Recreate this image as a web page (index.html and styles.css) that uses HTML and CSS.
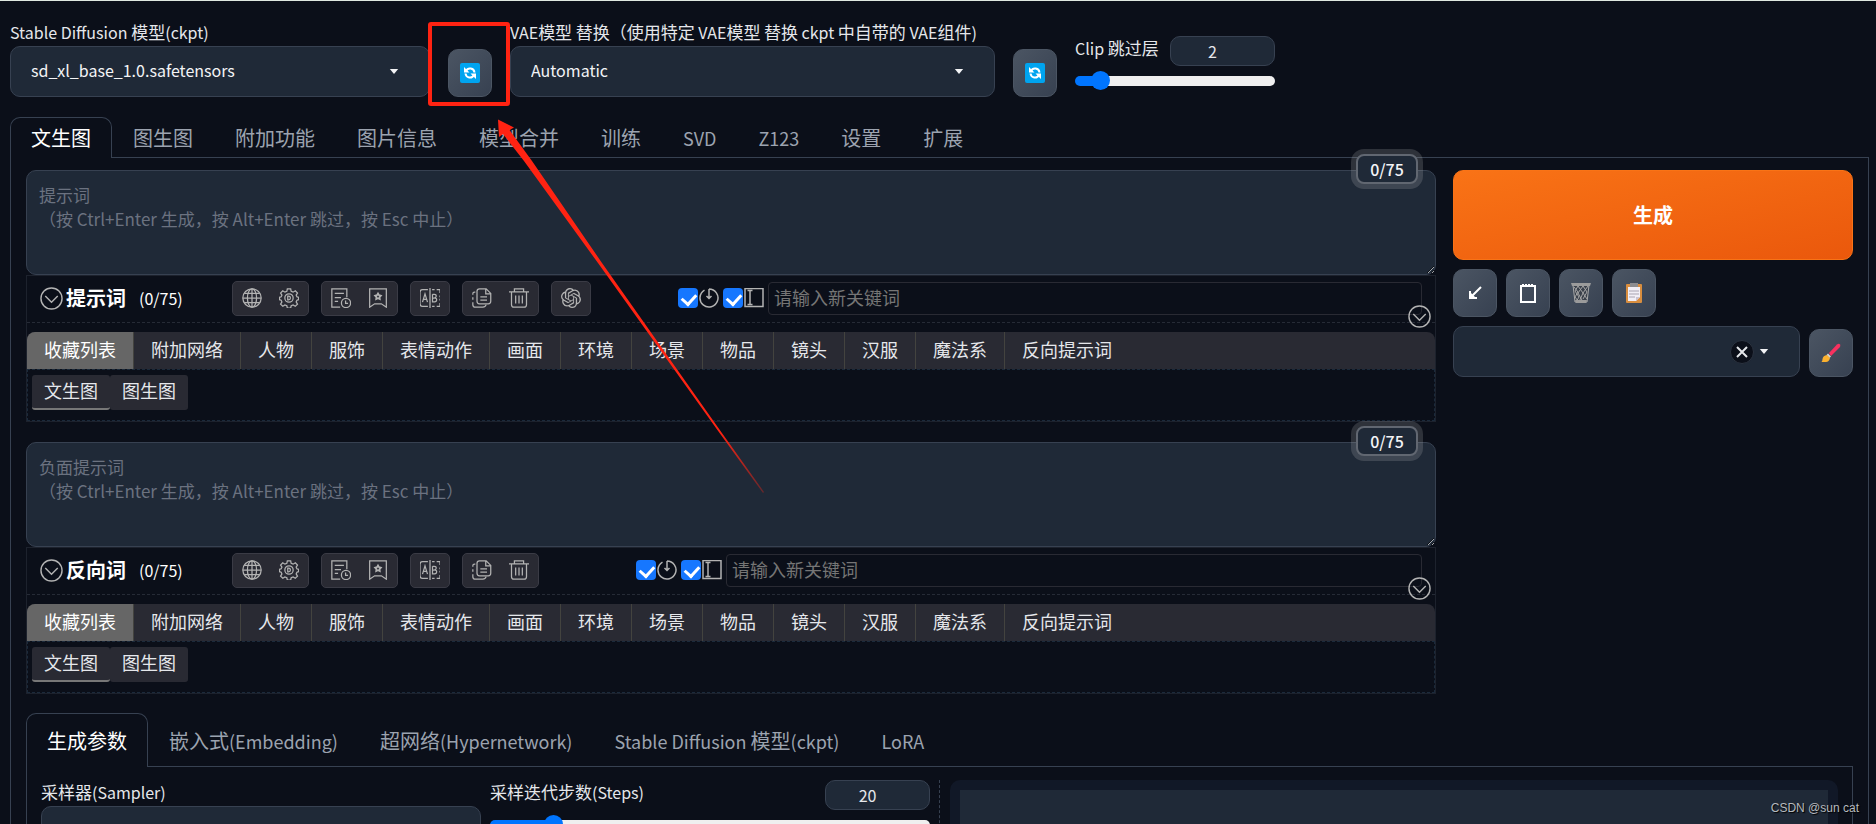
FILE: index.html
```html
<!DOCTYPE html>
<html lang="zh-CN">
<head>
<meta charset="utf-8">
<title>Stable Diffusion</title>
<link rel="stylesheet" href="styles.css">
</head>
<body>
<svg class="sprite" aria-hidden="true">
  <symbol id="i-refresh" viewBox="0 0 20 20"><rect width="20" height="20" rx="2" fill="#00a4ef"/><path d="M6 8A4.500 4.500 0 0 1 14.500 9.500M14 12A4.500 4.500 0 0 1 5.500 10.500" fill="none" stroke="#fff" stroke-width="2"/><path d="M4 4v5.500h5.500zM16 16v-5.500h-5.500z" fill="#fff"/></symbol>
  <symbol id="i-caret" viewBox="0 0 12 6"><path d="M1 0h10L6 6z" fill="currentColor"/></symbol>
  <symbol id="i-down" viewBox="0 0 24 24"><circle cx="12" cy="12" r="11"/><path d="M5.500 9.500l6.500 6.500 6.500-6.500"/></symbol>
  <symbol id="i-globe" viewBox="0 0 24 24"><circle cx="12" cy="12" r="11"/><ellipse cx="12" cy="12" rx="5.500" ry="11"/><path d="M12 1v22M1 12h22M3 6.500h18M3 17.500h18"/></symbol>
  <symbol id="i-gear" viewBox="0 0 24 24"><path d="M10 1h4l.6 3 2.300 1 2.700-1.700 2.600 2.700-1.600 2.500.9 2 2 .7v2.800l-2 .7-.9 2 1.600 2.600-2.700 2.600-2.600-1.600-2.300 1-.6 2.700h-4l-.6-2.700-2.300-1-2.500 1.600-2.700-2.600 1.600-2.600-.9-2-2-.7v-2.800l2-.7.9-2-1.600-2.500L4.500 3.300 7.100 5l2.300-1z"/><circle cx="12" cy="12" r="5"/><path d="M10.500 9.800v4.400h1q2.200 0 2.200-2.200t-2.200-2.200z"/></symbol>
  <symbol id="i-history" viewBox="0 0 24 24"><path d="M11 23H1V1h18v10M4.500 6.500h11M4.500 11.500h7.500M4.500 16h4"/><circle cx="18" cy="18" r="5.500"/><path d="M17.500 15v3.500h3"/></symbol>
  <symbol id="i-mark" viewBox="0 0 24 24"><path d="M2 1h20v22l-6-4H8l-6 4z"/><path d="M12 6.500l1.200 2.100 2.300.6-1.600 1.700.3 2.400-2.200-1-2.200 1 .3-2.400-1.600-1.700 2.300-.6z" stroke-width="2"/></symbol>
  <symbol id="i-ab" viewBox="0 0 24 24"><path d="M12 0v24M9.500 2H3Q0 2 0 5v14q0 3 3 3h6.500M14.500 2h3M20 2h4v4M24 9v2M24 13v2M24 18v4h-4M17.500 22h-3"/><path d="M3 17l3-10 3 10M4 13.500h4M15 7.500v9h2.500q2.500 0 2.500-2.300t-2.500-2.200H15M15 7.500h2.200q2.300 0 2.300 2.200T17.200 12"/></symbol>
  <symbol id="i-copy" viewBox="0 0 24 24"><path d="M9 1h8l5.500 5.500V16q0 3-3 3H9q-3 0-3-3V4q0-3 3-3zM16.500 1v6h6M10 10.500h8M10 14.500h8"/><path d="M4 5H3Q1 5 1 7v1M1 11v3M1 17v3q0 3 3 3h9q3 0 4-3"/></symbol>
  <symbol id="i-trash" viewBox="0 0 24 24"><path d="M0 4.500h24M6.500 4.500V1h11v3.500M3 5v15q0 3 3 3h12q3 0 3-3V5M8 9v9.500M12 9v9.500M16 9v9.500"/></symbol>
  <symbol id="i-knot" viewBox="0 0 24 24"><path fill="#b3b3b3" stroke="none" d="M22.2819 9.8211a5.9847 5.9847 0 0 0-.5157-4.9108 6.0462 6.0462 0 0 0-6.5098-2.9A6.0651 6.0651 0 0 0 4.9807 4.1818a5.9847 5.9847 0 0 0-3.9977 2.9 6.0462 6.0462 0 0 0 .7427 7.0966 5.98 5.98 0 0 0 .511 4.9107 6.051 6.051 0 0 0 6.5146 2.9001A5.9847 5.9847 0 0 0 13.2599 24a6.0557 6.0557 0 0 0 5.7718-4.2058 5.9894 5.9894 0 0 0 3.9977-2.9001 6.0557 6.0557 0 0 0-.7475-7.0729zm-9.022 12.6081a4.4755 4.4755 0 0 1-2.8764-1.0408l.1419-.0804 4.7783-2.7582a.7948.7948 0 0 0 .3927-.6813v-6.7369l2.02 1.1686a.071.071 0 0 1 .038.052v5.5826a4.504 4.504 0 0 1-4.4945 4.4944zm-9.6607-4.1254a4.4708 4.4708 0 0 1-.5346-3.0137l.142.0852 4.783 2.7582a.7712.7712 0 0 0 .7806 0l5.8428-3.3685v2.3324a.0804.0804 0 0 1-.0332.0615L9.74 19.9502a4.4992 4.4992 0 0 1-6.1408-1.6464zM2.3408 7.8956a4.485 4.485 0 0 1 2.3655-1.9728V11.6a.7664.7664 0 0 0 .3879.6765l5.8144 3.3543-2.0201 1.1685a.0757.0757 0 0 1-.071 0l-4.8303-2.7865A4.504 4.504 0 0 1 2.3408 7.872zm16.5963 3.8558L13.1038 8.364 15.1192 7.2a.0757.0757 0 0 1 .071 0l4.8303 2.7913a4.4944 4.4944 0 0 1-.6765 8.1042v-5.6772a.79.79 0 0 0-.407-.667zm2.0107-3.0231l-.142-.0852-4.7735-2.7818a.7759.7759 0 0 0-.7854 0L9.409 9.2297V6.8974a.0662.0662 0 0 1 .0284-.0615l4.8303-2.7866a4.4992 4.4992 0 0 1 6.6802 4.66zM8.3065 12.863l-2.02-1.1638a.0804.0804 0 0 1-.038-.0567V6.0742a4.4992 4.4992 0 0 1 7.3757-3.4537l-.142.0805L8.704 5.459a.7948.7948 0 0 0-.3927.6813zm1.0976-2.3654l2.602-1.4998 2.6069 1.4998v2.9994l-2.5974 1.4997-2.6067-1.4997Z"/></symbol>
  <symbol id="i-timer" viewBox="0 0 20 20"><path d="M10 1v9M7.500 8l2.500 2.500L12.500 8M10 1a9 9 0 1 1-4.500 1.200"/></symbol>
  <symbol id="i-cursor" viewBox="0 0 20 20"><path d="M1 .5h18v18H1zM3.500 2.500h5M6 2.500v14M3.500 16.500h5"/></symbol>
</svg>

<header class="quick">
  <div class="field field--ckpt">
    <label for="ckpt"><span class="en">Stable Diffusion</span> 模型<span class="en">(ckpt)</span></label>
    <div class="pick"><select id="ckpt"><option>sd_xl_base_1.0.safetensors</option></select><svg class="pick__caret"><use href="#i-caret"/></svg></div>
  </div>
  <button class="tool" aria-label="刷新模型"><svg class="emoji"><use href="#i-refresh"/></svg></button>
  <div class="field field--vae">
    <label for="vae"><span class="en">VAE</span>模型<span class="en"> </span>替换（使用特定<span class="en"> VAE</span>模型<span class="en"> </span>替换<span class="en"> ckpt </span>中自带的<span class="en"> VAE</span>组件<span class="en">)</span></label>
    <div class="pick"><select id="vae"><option>Automatic</option></select><svg class="pick__caret"><use href="#i-caret"/></svg></div>
  </div>
  <button class="tool" aria-label="刷新 VAE"><svg class="emoji"><use href="#i-refresh"/></svg></button>
  <div class="slider slider--clip">
    <div class="slider__head"><label for="clip"><span class="en">Clip </span>跳过层</label><input class="number" type="text" inputmode="numeric" value="2" aria-label="Clip 数值"></div>
    <input class="range" id="clip" type="range" min="1" max="12" value="2" style="--fill:13%">
  </div>
</header>

<main>
  <nav class="tabs">
    <button class="tab tab--on">文生图</button><button class="tab">图生图</button><button class="tab">附加功能</button><button class="tab">图片信息</button><button class="tab">模型合并</button><button class="tab">训练</button><button class="tab"><span class="en">SVD</span></button><button class="tab"><span class="en">Z123</span></button><button class="tab">设置</button><button class="tab">扩展</button>
  </nav>
  <section class="panel">
    <div class="top">
      <div class="prompts">
        <div class="prompt">
          <textarea aria-label="提示词" placeholder="提示词&#10;（按 Ctrl+Enter 生成，按 Alt+Enter 跳过，按 Esc 中止）"></textarea>
          <span class="counter">0/75</span>
          <div class="kit">
            <div class="kit__head">
              <button class="fold" aria-label="折叠"><svg><use href="#i-down"/></svg></button>
              <strong class="kit__name">提示词</strong><span class="kit__count">(0/75)</span>
              <div class="kit__tools">
                <div class="group"><button aria-label="语言"><svg><use href="#i-globe"/></svg></button><button aria-label="设置"><svg><use href="#i-gear"/></svg></button></div>
                <div class="group"><button aria-label="历史"><svg><use href="#i-history"/></svg></button><button aria-label="收藏"><svg><use href="#i-mark"/></svg></button></div>
                <div class="group"><button aria-label="翻译"><svg><use href="#i-ab"/></svg></button></div>
                <div class="group"><button aria-label="复制"><svg><use href="#i-copy"/></svg></button><button aria-label="删除"><svg><use href="#i-trash"/></svg></button></div>
                <div class="group"><button aria-label="ChatGPT"><svg><use href="#i-knot"/></svg></button></div>
              </div>
              <div class="adder">
                <label class="opt"><input type="checkbox" checked aria-label="自动载入"><svg><use href="#i-timer"/></svg></label>
                <label class="opt"><input type="checkbox" checked aria-label="自动输入"><svg><use href="#i-cursor"/></svg></label>
                <input class="adder__text" type="text" placeholder="请输入新关键词" aria-label="新关键词">
              </div>
              <button class="fold fold--end" aria-label="展开"><svg><use href="#i-down"/></svg></button>
            </div>
            <div class="cats"><button class="cat cat--on">收藏列表</button><button class="cat">附加网络</button><button class="cat">人物</button><button class="cat">服饰</button><button class="cat">表情动作</button><button class="cat">画面</button><button class="cat">环境</button><button class="cat">场景</button><button class="cat">物品</button><button class="cat">镜头</button><button class="cat">汉服</button><button class="cat">魔法系</button><button class="cat">反向提示词</button></div>
            <div class="subs"><button class="sub sub--on">文生图</button><button class="sub">图生图</button></div>
          </div>
        </div>

        <div class="prompt">
          <textarea aria-label="负面提示词" placeholder="负面提示词&#10;（按 Ctrl+Enter 生成，按 Alt+Enter 跳过，按 Esc 中止）"></textarea>
          <span class="counter">0/75</span>
          <div class="kit">
            <div class="kit__head">
              <button class="fold" aria-label="折叠"><svg><use href="#i-down"/></svg></button>
              <strong class="kit__name">反向词</strong><span class="kit__count">(0/75)</span>
              <div class="kit__tools">
                <div class="group"><button aria-label="语言"><svg><use href="#i-globe"/></svg></button><button aria-label="设置"><svg><use href="#i-gear"/></svg></button></div>
                <div class="group"><button aria-label="历史"><svg><use href="#i-history"/></svg></button><button aria-label="收藏"><svg><use href="#i-mark"/></svg></button></div>
                <div class="group"><button aria-label="翻译"><svg><use href="#i-ab"/></svg></button></div>
                <div class="group"><button aria-label="复制"><svg><use href="#i-copy"/></svg></button><button aria-label="删除"><svg><use href="#i-trash"/></svg></button></div>
              </div>
              <div class="adder adder--far">
                <label class="opt"><input type="checkbox" checked aria-label="自动载入"><svg><use href="#i-timer"/></svg></label>
                <label class="opt"><input type="checkbox" checked aria-label="自动输入"><svg><use href="#i-cursor"/></svg></label>
                <input class="adder__text" type="text" placeholder="请输入新关键词" aria-label="新关键词">
              </div>
              <button class="fold fold--end" aria-label="展开"><svg><use href="#i-down"/></svg></button>
            </div>
            <div class="cats"><button class="cat cat--on">收藏列表</button><button class="cat">附加网络</button><button class="cat">人物</button><button class="cat">服饰</button><button class="cat">表情动作</button><button class="cat">画面</button><button class="cat">环境</button><button class="cat">场景</button><button class="cat">物品</button><button class="cat">镜头</button><button class="cat">汉服</button><button class="cat">魔法系</button><button class="cat">反向提示词</button></div>
            <div class="subs"><button class="sub sub--on">文生图</button><button class="sub">图生图</button></div>
          </div>
        </div>
      </div>

      <aside class="actions">
        <button class="generate">生成</button>
        <div class="actions__row">
          <button class="tool" aria-label="读取参数"><svg class="emoji" viewBox="0 0 20 20"><path d="M16 4L6 14M5 8v7h7" fill="none" stroke="#fff" stroke-width="2"/><path d="M4 8l8 8H4z" fill="#fff"/></svg></button>
          <button class="tool" aria-label="粘贴"><svg class="emoji" viewBox="0 0 20 20"><path d="M3 3h14v16H3z" fill="none" stroke="#fff" stroke-width="2"/><path d="M5 1v3M8 1v3M11 1v3M14 1v3" stroke="#fff" stroke-width="2"/></svg></button>
          <button class="tool" aria-label="清空"><svg class="emoji" viewBox="0 0 20 20"><path d="M2 2h16l-2 17H4z" fill="#3b414b" stroke="#aaa" stroke-width="1"/><path d="M3 4l4 5-3 5 3 4M7 3l-3 5 4 6-3 5M7 3l5 7-4 9M12 3L7 10l5 9M12 3l4 6-4 7M17 3l-5 7 4 6" fill="none" stroke="#a5a5a5" stroke-width="1"/><path d="M0 0h20l-1 3H1zM4 17h12l-1 3H5z" fill="#9b9b9b"/></svg></button>
          <button class="tool" aria-label="应用样式"><svg class="emoji" viewBox="0 0 20 20"><rect x="2" y="1" width="16" height="19" rx="1" fill="#d98e3f"/><path d="M4 4h12v10l-4 4H4z" fill="#f1eef6"/><path d="M12 18v-4h4z" fill="#c9c2d3"/><path d="M6 0h8v4H6z" fill="#8c8c90"/><path d="M5 8h10M5 11h10M5 14h6" stroke="#a9a4b2"/></svg></button>
        </div>
        <div class="actions__row">
          <div class="pick pick--style"><select aria-label="样式"><option></option></select><button class="clear" aria-label="清除"><svg viewBox="0 0 12 12"><path d="M1 1l10 10M11 1L1 11"/></svg></button><svg class="pick__caret"><use href="#i-caret"/></svg></div>
          <button class="tool" aria-label="编辑样式"><svg class="emoji" viewBox="0 0 20 20"><path d="M8 10L16 1.500q2-1.500 3 0t-.5 3L10 13z" fill="#f8315f"/><path d="M7 10.500l3 3-1.500 1.500-3-3z" fill="#d3d3d3"/><path d="M6 12l3 3q-1 4-4 4H.5q1-1 1-3 .5-3.500 4.500-4z" fill="#fbb12f"/></svg></button>
        </div>
      </aside>
    </div>

    <nav class="tabs tabs--tall">
      <button class="tab tab--on">生成参数</button><button class="tab">嵌入式<span class="en">(Embedding)</span></button><button class="tab">超网络<span class="en">(Hypernetwork)</span></button><button class="tab"><span class="en">Stable Diffusion </span>模型<span class="en">(ckpt)</span></button><button class="tab"><span class="en">LoRA</span></button>
    </nav>
    <section class="params">
      <div class="params__form">
        <div class="field">
          <label for="sampler">采样器<span class="en">(Sampler)</span></label>
          <div class="pick"><select id="sampler"><option></option></select></div>
        </div>
        <div class="slider">
          <div class="slider__head"><label for="steps">采样迭代步数<span class="en">(Steps)</span></label><input class="number" type="text" inputmode="numeric" value="20" aria-label="步数数值"></div>
          <input class="range" id="steps" type="range" min="1" max="150" value="20" style="--fill:14%">
        </div>
      </div>
      <div class="gallery"><div class="gallery__view"></div></div>
    </section>
  </section>
</main>

<svg class="marks" width="800" height="520" viewBox="0 0 800 520" aria-hidden="true">
  <defs><linearGradient id="fade" gradientUnits="userSpaceOnUse" x1="720" y1="431" x2="764" y2="493"><stop offset="0" stop-color="#ff2312"/><stop offset="1" stop-color="#ff2312" stop-opacity="0.300"/></linearGradient></defs>
  <rect x="430" y="24" width="78" height="80" rx="1" fill="none" stroke="#ff2312" stroke-width="4"/>
  <path d="M498 119.500L514 127.500 509.500 130 532 161 602 263 720.500 431 764 492 763 493 718.500 431.500 598 263 524 161 503 134 499 137z" fill="url(#fade)"/>
</svg>
<div class="credit">CSDN @sun cat</div>
</body>
</html>
```
FILE: styles.css
```css
* { box-sizing: border-box; }

body {
  position: relative;
  margin: 0;
  height: 100vh;
  overflow: hidden;
  padding: 19px 7px 0 10px;
  border-top: 1px solid #dfe8e0;
  background: #0b0f19;
  color: #e5e7eb;
  font: 18px/24px "Noto Sans CJK SC", sans-serif;
}

button, input, select, textarea { font: inherit; color: inherit; margin: 0; }
button { padding: 0; border: 0; background: none; }
.sprite { display: none; }

/* Latin runs are set a step smaller than the Chinese around them */
.en { font-size: 16px; line-height: 1; white-space: pre; }
.tab .en { font-size: 18px; }

/* quick settings */
.quick { display: flex; align-items: flex-end; gap: 18px; }
.field { display: flex; flex-direction: column; gap: 2px; min-width: 0; }
.field--ckpt { width: 420px; }
.field--vae { width: 485px; }
label { height: 24px; white-space: nowrap; font-size: 17px; }

.pick { position: relative; display: flex; align-items: center; }
.pick select {
  appearance: none;
  width: 100%;
  height: 51px;
  padding: 0 20px 3px;
  border: 1px solid #374151;
  border-radius: 10px;
  background: #1f2937;
  color: #f3f4f6;
  font-size: 16px;
}
.pick__caret { position: absolute; right: 31px; width: 10px; height: 5px; color: #f3f4f6; }
.pick--style { flex: 1; }
.clear {
  position: absolute;
  right: 46px;
  display: grid;
  place-items: center;
  width: 24px;
  height: 24px;
  border: 1px solid #2b3340;
  border-radius: 50%;
  background: #0b0f19;
}
.clear svg { width: 12px; height: 12px; stroke: #e5e7eb; stroke-width: 2; }

.tool {
  display: grid;
  place-items: center;
  flex: none;
  width: 44px;
  height: 48px;
  border: 1px solid #4b5563;
  border-radius: 10px;
  background: linear-gradient(to bottom right, #4b5563, #374151);
}
.emoji { width: 20px; height: 20px; }

.slider { display: flex; flex-direction: column; gap: 5px; min-width: 0; }
.slider--clip { width: 200px; margin-bottom: 6px; }
.slider__head { display: flex; justify-content: space-between; align-items: flex-start; }
.number {
  width: 105px;
  height: 30px;
  padding: 0 20px 0 0;
  border: 1px solid #374151;
  border-radius: 10px;
  background: #1f2937;
  text-align: center;
  font-size: 16px;
}
.range { appearance: none; width: 100%; height: 20px; background: none; }
.range::-webkit-slider-runnable-track {
  height: 10px;
  border-radius: 5px;
  background: linear-gradient(to right, #0075ff var(--fill), #efefef var(--fill));
}
.range::-webkit-slider-thumb {
  appearance: none;
  width: 19px;
  height: 19px;
  margin-top: -5px;
  border-radius: 50%;
  background: #0075ff;
}

/* tabs */
.tabs { position: relative; display: flex; margin: 20px 0 -1px; }
.tab {
  height: 41px;
  padding: 0 20px;
  border: 1px solid transparent;
  border-bottom: 0;
  color: #9ca3af;
  font-size: 20px;
  white-space: nowrap;
}
.tab--on { border-color: #374151; border-radius: 10px 10px 0 0; background: #0b0f19; color: #fff; }
.tabs--tall { margin-top: 19px; }
.tabs--tall .tab { height: 54px; }
.panel { padding: 12px 15px 0; border: 1px solid #374151; }
.top { display: grid; grid-template-columns: minmax(0, 1fr) 400px; gap: 17px; }

/* prompts */
.prompts { display: flex; flex-direction: column; gap: 20px; }
.prompt { position: relative; }
textarea {
  display: block;
  width: 100%;
  height: 105px;
  padding: 12px 12px;
  border: 1px solid #374151;
  border-radius: 10px;
  background: #1f2937;
  resize: vertical;
  color-scheme: dark;
}
textarea::placeholder { color: #6b7280; font-size: 17px; }
.counter {
  position: absolute;
  top: -16px;
  right: 18px;
  width: 62px;
  height: 30px;
  border: 2px solid #616771;
  border-radius: 8px;
  background: #1f2937;
  box-shadow: 0 0 0 5px rgba(192, 192, 192, 0.200);
  color: #f3f4f6;
  font-size: 16px;
  line-height: 26px;
  font-weight: 500;
  text-align: center;
}

.kit { border: 1px solid #1d222d; }
.kit__head {
  position: relative;
  display: flex;
  align-items: center;
  height: 47px;
  padding: 0 13px 2px;
  border-bottom: 1px dashed #262b36;
}
.kit svg { fill: none; stroke: #b3b3b3; stroke-width: 1.5; overflow: visible; }
.fold { display: grid; place-items: center; width: 23px; height: 23px; }
.fold svg { width: 23px; height: 23px; }
.fold--end { position: absolute; right: 4px; bottom: -6px; }
.kit__name { width: 64px; margin-left: 3px; color: #fff; font-size: 20px; }
.kit__count { width: 93px; margin-left: 9px; color: #fff; font-size: 16px; }
.kit__tools { display: flex; gap: 12px; }
.group {
  display: flex;
  gap: 17px;
  height: 35px;
  padding: 0 9px;
  border: 1px solid #3a3b45;
  border-radius: 5px;
  background: #292a33;
}
.group button { display: grid; place-items: center; width: 20px; }
.group svg { width: 20px; height: 20px; }
.adder { display: flex; flex: 1; align-items: center; gap: 4px; margin-left: 87px; }
.adder--far { margin-left: 97px; }
.opt { display: flex; gap: 1px; height: 20px; }
.opt input {
  appearance: none;
  width: 20px;
  height: 20px;
  border-radius: 4px;
  background: #1677ff;
}
.opt input:checked::after {
  content: "";
  display: block;
  width: 7px;
  height: 11px;
  margin: 3px 0 0 6px;
  border: solid #fff;
  border-width: 0 3px 3px 0;
  rotate: 42deg;
}
.opt svg { width: 20px; height: 20px; }
.adder__text {
  flex: 1;
  min-width: 0;
  height: 33px;
  padding: 0 5px 3px;
  border: 1px solid #292a33;
  border-radius: 4px;
  background: transparent;
}
.adder__text::placeholder { color: #757575; }

.cats {
  display: flex;
  height: 37px;
  margin-top: 9px;
  border-radius: 8px 8px 0 0;
  background: #292a33;
  overflow: hidden;
}
.cat { padding: 0 17px 3px; border-right: 1px solid #43433f; color: #e5e7eb; white-space: nowrap; }
.cat:last-child { border-right: 0; }
.cat--on { background: #666; color: #fff; }
.subs { display: flex; height: 52px; padding: 5px 4px; border: 1px dashed #1b2a3b; }
.sub {
  height: 35px;
  padding: 0 12px 3px;
  border-bottom: 2px solid #292a33;
  border-radius: 3px;
  background: #292a33;
}
.sub--on { border-bottom-color: #777; }

/* actions */
.actions { display: flex; flex-direction: column; gap: 9px; }
.actions__row { display: flex; align-items: flex-end; gap: 9px; }
.generate {
  height: 90px;
  border: 1px solid #f97316;
  border-radius: 10px;
  background: linear-gradient(to bottom right, #f97316, #ea580c);
  color: #fff;
  font-size: 20px;
  font-weight: 700;
}

/* parameters */
.params {
  display: grid;
  grid-template-columns: 81fr 80fr;
  gap: 10px;
  padding: 13px 14px 0;
  border: 1px solid #374151;
}
.params__form {
  display: grid;
  grid-template-columns: 1fr 1fr;
  gap: 9px;
  height: 400px;
  padding-right: 9px;
  border-right: 1px dashed #374151;
}
.gallery { padding: 10px; border-radius: 10px 10px 0 0; background: #111827; }
.gallery__view { height: 100%; background: #1f2937; }

/* overlays */
.marks { position: absolute; left: 0; top: -1px; }
.credit {
  position: absolute;
  right: 17px;
  bottom: 7px;
  color: #b6b9be;
  font: 12px/18px "Liberation Sans", sans-serif;
  text-shadow: 1px 1px 1px #000;
}
```
